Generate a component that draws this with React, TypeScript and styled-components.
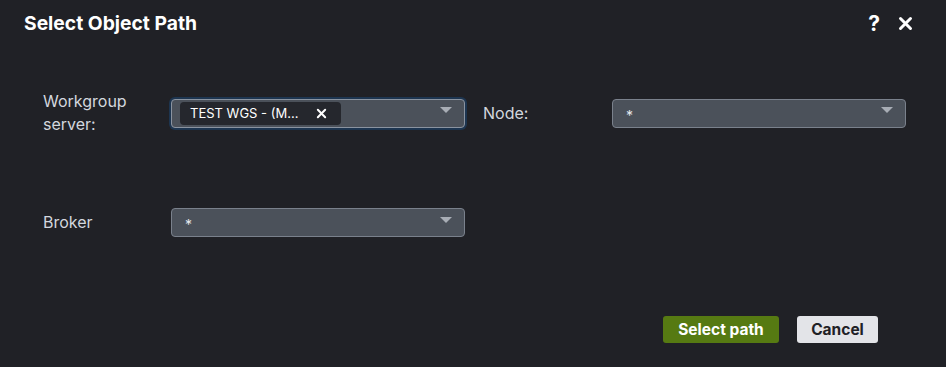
import styled, { createGlobalStyle } from 'styled-components';

const Global = createGlobalStyle`
  html, body {
    margin: 0;
    padding: 0;
    background: #202126;
  }
  * {
    box-sizing: border-box;
  }
`;

const Dialog = styled.div`
  width: 946px;
  height: 367px;
  background: #202126;
  font-family: Inter, 'Noto Sans', sans-serif;
  color: #d3d7de;
  display: flex;
  flex-direction: column;
`;

const Header = styled.div`
  height: 46px;
  padding: 0 33px 0 24px;
  display: flex;
  align-items: center;
  justify-content: space-between;
`;

const Title = styled.h1`
  margin: 0;
  font-size: 19.3px;
  font-weight: 700;
  color: #ffffff;
`;

const HeaderTools = styled.div`
  display: flex;
  align-items: center;
  gap: 18px;
`;

const ToolButton = styled.button`
  background: none;
  border: 0;
  padding: 0;
  color: #ffffff;
  font-family: Inter, sans-serif;
  font-size: 21px;
  font-weight: 700;
  line-height: 1;
  cursor: pointer;
  display: flex;
  align-items: center;
`;

const Form = styled.div`
  padding: 44px 40px 0 43px;
  display: grid;
  grid-template-columns: 128px 294px 147px 294px;
  row-gap: 72px;
  align-items: center;
`;

const Label = styled.label<{ $indent?: boolean }>`
  font-size: 16px;
  line-height: 23px;
  color: #d3d7de;
  padding-left: ${({ $indent }) => ($indent ? '18px' : '0')};
`;

const Select = styled.div<{ $focused?: boolean }>`
  height: 29px;
  border-radius: 4px;
  background: #4b515a;
  border: 1px solid ${({ $focused }) => ($focused ? '#8a93a0' : '#7a818c')};
  box-shadow: ${({ $focused }) => ($focused ? '0 0 0 2px #1d3550' : 'none')};
  display: flex;
  align-items: center;
  padding: 0 12px 0 8px;
`;

const Placeholder = styled.span`
  font-size: 14px;
  color: #e6e9ee;
  padding-left: 5px;
  padding-top: 4px;
  flex: 1;
`;

const Chip = styled.span`
  height: 23px;
  background: #25272d;
  border-radius: 4px;
  display: flex;
  align-items: center;
  padding: 0 14px 0 10px;
  gap: 18px;
  font-size: 13px;
  color: #ffffff;
`;

const ChipClose = styled.span`
  display: flex;
  align-items: center;
`;

const Spacer = styled.span`
  flex: 1;
`;

const Caret = styled.span`
  width: 0;
  height: 0;
  border-left: 6px solid transparent;
  border-right: 6px solid transparent;
  border-top: 6px solid #a8adb5;
  margin-top: -6px;
`;

const Footer = styled.div`
  margin-top: auto;
  padding: 0 68px 24px 0;
  display: flex;
  justify-content: flex-end;
  gap: 18px;
`;

const Button = styled.button<{ $primary?: boolean }>`
  height: 27px;
  border: 0;
  border-radius: 3px;
  padding: 0 14px;
  font-family: Inter, sans-serif;
  font-size: 15.5px;
  font-weight: 700;
  cursor: pointer;
  background: ${({ $primary }) => ($primary ? '#567a12' : '#e3e4e8')};
  color: ${({ $primary }) => ($primary ? '#ffffff' : '#1f2126')};
  min-width: ${({ $primary }) => ($primary ? '116px' : '81px')};
`;

const XIcon = ({ size, stroke }: { size: number; stroke: number }) => (
  <svg width={size} height={size} viewBox="0 0 12 12">
    <path d="M2 2 L10 10 M10 2 L2 10" stroke="#fff" strokeWidth={stroke} strokeLinecap="round" />
  </svg>
);

const App = () => {
  return (
    <>
      <Global />
      <Dialog>
        <Header>
          <Title>Select Object Path</Title>
          <HeaderTools>
            <ToolButton>?</ToolButton>
            <ToolButton>
              <XIcon size={15} stroke={2.4} />
            </ToolButton>
          </HeaderTools>
        </Header>
        <Form>
          <Label>
            Workgroup
            <br />
            server:
          </Label>
          <Select $focused>
            <Chip>
              TEST WGS - (M...
              <ChipClose>
                <XIcon size={11} stroke={2.2} />
              </ChipClose>
            </Chip>
            <Spacer />
            <Caret />
          </Select>
          <Label $indent>Node:</Label>
          <Select>
            <Placeholder>*</Placeholder>
            <Caret />
          </Select>
          <Label>Broker</Label>
          <Select>
            <Placeholder>*</Placeholder>
            <Caret />
          </Select>
        </Form>
        <Footer>
          <Button $primary>Select path</Button>
          <Button>Cancel</Button>
        </Footer>
      </Dialog>
    </>
  );
};

export default App;
